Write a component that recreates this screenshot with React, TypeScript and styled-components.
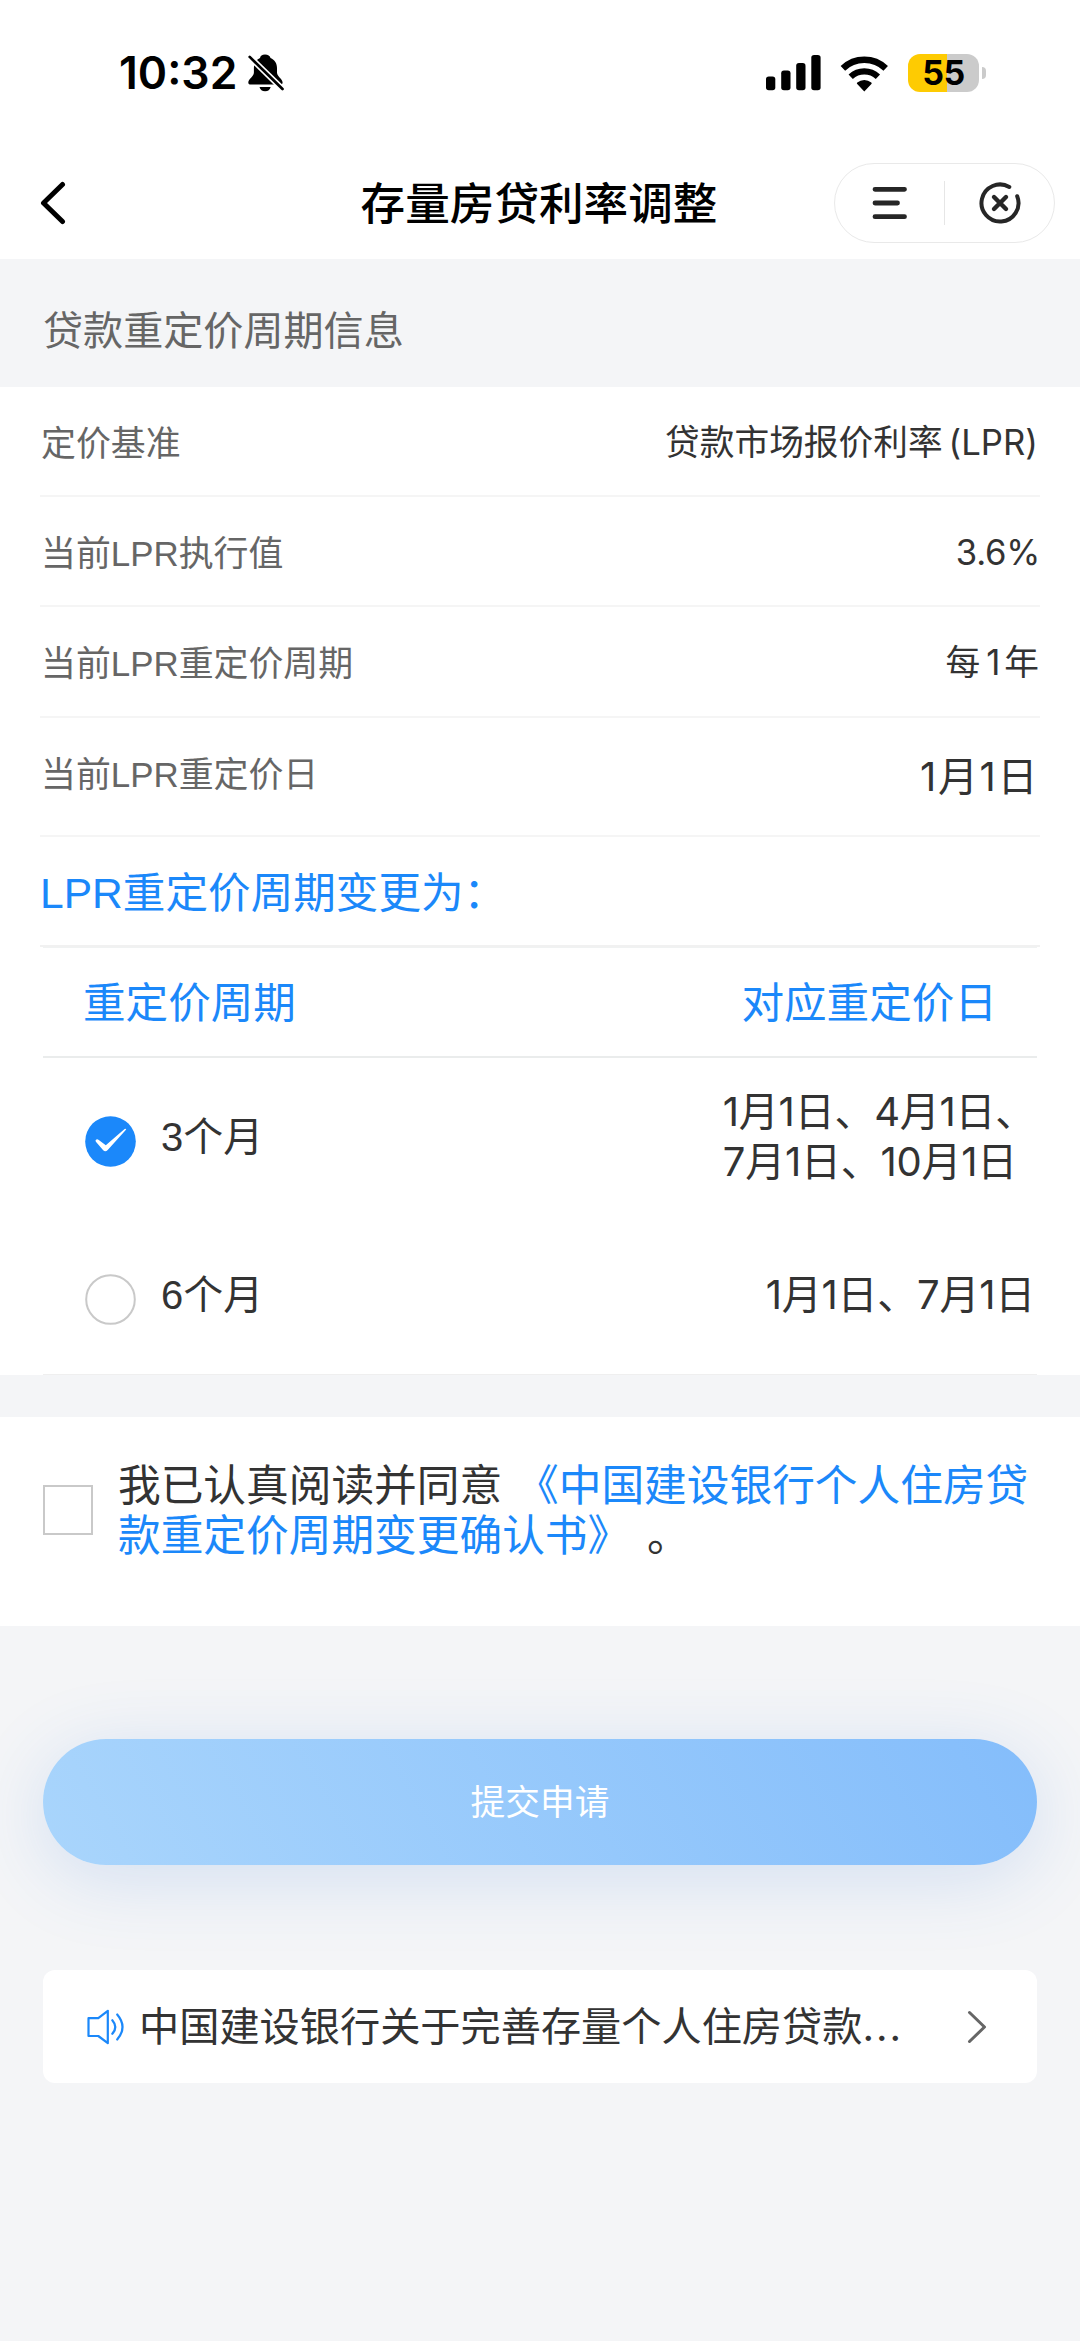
import React from 'react';
import styled, { createGlobalStyle } from 'styled-components';

const BLUE = '#1b88fa';
const sysFont = `Inter, "Noto Sans CJK SC", sans-serif`;
const bodyFont = `"Liberation Sans", "Noto Sans CJK SC", sans-serif`;

const GlobalStyle = createGlobalStyle`
  * { box-sizing: border-box; }
  body { margin: 0; background: #f4f5f7; }
`;

const Page = styled.div`
  width: 1080px;
  height: 2341px;
  display: flex;
  flex-direction: column;
  background: #f4f5f7;
  color: #333;
  font-family: ${bodyFont};
  overflow: hidden;
  white-space: nowrap;
`;

const StatusBar = styled.div`
  height: 146px;
  flex: none;
  display: flex;
  align-items: center;
  padding: 0 94px 0 119px;
  background: #fff;
  color: #000;
`;

const Clock = styled.span`
  width: 129px;
  font: 600 44.5px/60px ${sysFont};
  letter-spacing: 0;
`;

const StatusIcons = styled.div`
  margin-left: auto;
  display: flex;
  align-items: center;
`;

const SignalIcon = styled.svg`
  margin-right: 19px;
`;

const WifiIcon = styled.svg`
  margin-right: 19px;
`;

const Battery = styled.div`
  width: 71px;
  height: 38px;
  border-radius: 12px;
  background: linear-gradient(90deg, #fecb02 39px, #cbcbcb 39px);
  font: 650 34px/38px ${sysFont};
  letter-spacing: -0.5px;
  text-align: center;
`;

const BatteryTip = styled.span`
  width: 4px;
  height: 12px;
  margin-left: 3px;
  border-radius: 0 6px 6px 0;
  background: #cbcbcb;
`;

const NavBar = styled.header`
  height: 113px;
  flex: none;
  display: grid;
  grid-template-columns: 300px 1fr 300px;
  align-items: center;
  padding: 1px 25px 0 40px;
  background: #fff;
  color: #000;
`;

const NavTitle = styled.h1`
  margin: 0;
  padding: 1px 17px 0 0;
  text-align: center;
  font: 500 44.6px/60px ${sysFont};
`;

const Capsule = styled.div`
  justify-self: end;
  display: flex;
  align-items: center;
  width: 221px;
  height: 80px;
  border: 1.5px solid #e9e9e9;
  border-radius: 40px;
`;

const CapsuleHalf = styled.span`
  flex: 1;
  display: flex;
  justify-content: center;
`;

const CapsuleDivider = styled.span`
  width: 1px;
  height: 44px;
  background: #e6e6e6;
`;

const SectionTitle = styled.h2`
  height: 128px;
  flex: none;
  margin: 0;
  padding: 9px 43px 0;
  color: #666;
  font: 400 40.1px/126px ${bodyFont};
`;

const Panel = styled.section`
  flex: none;
  background: #fff;
`;

const InfoRow = styled.div<{ $height: number }>`
  display: flex;
  justify-content: space-between;
  height: ${(p) => p.$height}px;
  margin: 0 40px;
  border-bottom: 2px solid #f5f5f5;
`;

const InfoLabel = styled.span`
  padding-left: 1px;
  color: #666;
  font: 400 34.9px/113px ${bodyFont};
`;

const InfoValue = styled.span<{ $large?: boolean; $right?: number }>`
  font: 400 ${(p) => (p.$large ? 40 : 34.7)}px/${(p) => (p.$large ? 118 : 111)}px ${sysFont};
  letter-spacing: ${(p) => (p.$large ? 1.6 : 0)}px;
  padding-right: ${(p) => p.$right ?? 1}px;
`;

const Latin = styled.span`
  margin-left: 6px;
`;

const Numeral = styled.span`
  margin: 0 4px 0 6px;
`;

const Percent = styled.span`
  letter-spacing: -0.3px;
`;

const ChangeTitle = styled.h3`
  height: 110px;
  margin: 0 40px;
  border-bottom: 2px solid #f1f1f1;
  color: ${BLUE};
  font: 400 42.6px/112px ${bodyFont};
`;

const Table = styled.div`
  margin: 0 43px;
  border-bottom: 1px solid #efefef;
`;

const TableHead = styled.div`
  display: flex;
  justify-content: space-between;
  height: 111px;
  padding: 0 40px 0 40px;
  border-top: 1px solid #f0f2f2;
  border-bottom: 2px solid #eaecec;
  color: ${BLUE};
  font: 400 42.6px/111px ${bodyFont};
`;

const OptionRow = styled.div`
  display: flex;
  align-items: center;
  height: 158px;
  padding-left: 42px;
`;

const OptionLabel = styled.span`
  margin-left: 25px;
  font: 400 40px/50px ${bodyFont};
`;

const OptionDates = styled.span<{ $right: number }>`
  margin-left: auto;
  margin-right: ${(p) => p.$right}px;
  font: 400 40px/50.4px ${sysFont};
  letter-spacing: -0.25px;
`;

const RadioMark = styled.svg`
  margin-top: 9px;
  flex: none;
`;

const Gap = styled.div`
  height: 42px;
  flex: none;
`;

const Agreement = styled.label`
  flex: none;
  display: flex;
  align-items: flex-start;
  height: 209px;
  padding: 44px 43px 0;
  background: #fff;
`;

const CheckSquare = styled.span`
  flex: none;
  width: 50px;
  height: 50px;
  margin: 24px 25px 0 0;
  border: 2px solid #c9c9c9;
`;

const AgreementText = styled.p`
  margin: 0;
  width: 920px;
  white-space: normal;
  font: 400 42.7px/50px ${bodyFont};
`;

const DocLink = styled.span`
  margin: 0 5px 0 2px;
  color: ${BLUE};
`;

const SubmitButton = styled.button`
  flex: none;
  width: 994px;
  height: 126px;
  margin: 113px 43px 105px;
  border: 0;
  padding: 0;
  border-radius: 63px;
  background: linear-gradient(60deg, #a9d5fc 0%, #84bdfb 100%);
  box-shadow: 0 13px 76px rgba(60, 130, 220, 0.18);
  color: #fff;
  font: 400 34.7px/128px ${bodyFont};
`;

const Notice = styled.a`
  flex: none;
  display: flex;
  align-items: center;
  height: 113px;
  margin: 0 43px;
  padding: 0 50px 0 44px;
  border-radius: 12px;
  background: #fff;
`;

const NoticeText = styled.span`
  margin: 0 auto 0 14px;
  font: 400 40.2px/60px ${sysFont};
`;

const Dots = styled.span`
  letter-spacing: 2px;
`;

const BellSlash = () => (
  <svg width="37" height="39" viewBox="0 0 37 39">
    <path d="M17 0.4c-3 0-4.6 1.400-5 3.600C7.700 5.900 5.900 9.500 5.900 14v4.500c0 4-5.600 6.600-5.600 9.900 0 1.300.9 2.100 2.300 2.100h29.600c1.500 0 2.400-.8 2.400-2.100 0-3.300-5.600-5.900-5.600-9.900V14c0-4.500-2.200-8.100-6.500-10C22 1.800 20 .4 17 .4z" fill="#000" />
    <path d="M11.500 32.900h11.200c-.6 2.700-2.700 4.300-5.600 4.300s-5-1.600-5.600-4.300z" fill="#000" />
    <path d="M0 1.200 36.500 37" stroke="#fff" strokeWidth="6" />
    <path d="M1.700 2.900 34.500 35" stroke="#000" strokeWidth="2.700" strokeLinecap="round" />
  </svg>
);

const Signal = () => (
  <SignalIcon width="55" height="36" viewBox="0 0 55 36">
    <rect x="0" y="21.500" width="9.300" height="13.800" rx="2.800" />
    <rect x="15.200" y="15.500" width="9.300" height="19.800" rx="2.800" />
    <rect x="30.200" y="8" width="9.300" height="27.300" rx="2.800" />
    <rect x="45.300" y="0" width="9.300" height="35.300" rx="2.800" />
  </SignalIcon>
);

const Wifi = () => (
  <WifiIcon width="49" height="37" viewBox="0 0 49 37">
    <path d="M24.300 36.400 17.200 28.900q-.8-.8.100-1.500a11 11 0 0 1 14 0q.9.700.1 1.500z" />
    <path d="M10.700 21.800a20 20 0 0 1 27.200 0" fill="none" stroke="#000" strokeWidth="6.300" />
    <path d="M2.900 13.300a31 31 0 0 1 42.800 0" fill="none" stroke="#000" strokeWidth="6.500" />
  </WifiIcon>
);

const BackIcon = () => (
  <svg width="27" height="44" viewBox="0 0 27 44" fill="none" stroke="#000" strokeWidth="5" strokeLinecap="round" strokeLinejoin="round">
    <path d="M22.500 3.500 3.500 22l19 18.500" />
  </svg>
);

const MenuIcon = () => (
  <svg width="36" height="34" viewBox="0 0 36 34" fill="none" stroke="#262626" strokeWidth="4.800" strokeLinecap="round">
    <path d="M3 3.300h29.500M3 17h22.500M3 30.700h29.500" />
  </svg>
);

const CloseIcon = () => (
  <svg width="42" height="42" viewBox="0 0 42 42" fill="none" stroke="#262626" strokeWidth="4" strokeLinecap="round">
    <path d="M30.300 5A18.500 18.500 0 1 0 38.200 14.200" />
    <path d="M15 15l12 12M27 15 15 27" strokeWidth="4.400" />
  </svg>
);

const Radio = ({ checked }: { checked?: boolean }) => (
  <RadioMark width="51" height="51" viewBox="0 0 51 51">
    {checked ? (
      <>
        <circle cx="25.500" cy="25.500" r="25.300" fill={BLUE} />
        <path d="M10.800 24.100q1.200-1.700 3 0l7 5.200L39.600 12.900q1.300-.6 1.600.6L22.700 34q-2.400 2.400-4.500.2l-7.300-8.400q-.7-.9-.1-1.700z" fill="#fff" />
      </>
    ) : (
      <circle cx="25.500" cy="25.500" r="24.300" fill="#fff" stroke="#c9c9c9" strokeWidth="2" />
    )}
  </RadioMark>
);

const SpeakerIcon = () => (
  <svg width="38" height="36" viewBox="0 0 38 36" fill="none" stroke={BLUE} strokeWidth="2.200" strokeLinecap="round" strokeLinejoin="round">
    <path d="M1.500 9.200h9.800L20.800 1.800v32.400L11.300 27H1.500z" />
    <path d="M25.300 11.200q6 6.800 0 13.600M30.200 5.500q10.600 12.500 0 25" />
  </svg>
);

const ArrowIcon = () => (
  <svg width="20" height="34" viewBox="0 0 20 34" fill="none" stroke="#666" strokeWidth="3" strokeLinecap="round" strokeLinejoin="round">
    <path d="M2.500 2.500 17.500 17l-15 14.500" />
  </svg>
);

export default function App() {
  return (
    <Page>
      <GlobalStyle />
      <StatusBar>
        <Clock>10:32</Clock>
        <BellSlash />
        <StatusIcons>
          <Signal />
          <Wifi />
          <Battery>55</Battery>
          <BatteryTip />
        </StatusIcons>
      </StatusBar>
      <NavBar>
        <BackIcon />
        <NavTitle>存量房贷利率调整</NavTitle>
        <Capsule>
          <CapsuleHalf><MenuIcon /></CapsuleHalf>
          <CapsuleDivider />
          <CapsuleHalf><CloseIcon /></CapsuleHalf>
        </Capsule>
      </NavBar>

      <SectionTitle>贷款重定价周期信息</SectionTitle>
      <Panel>
        <InfoRow $height={110}>
          <InfoLabel>定价基准</InfoLabel>
          <InfoValue $right={2}>贷款市场报价利率<Latin>(LPR)</Latin></InfoValue>
        </InfoRow>
        <InfoRow $height={110}>
          <InfoLabel>当前LPR执行值</InfoLabel>
          <InfoValue $right={0}><Percent>3.6%</Percent></InfoValue>
        </InfoRow>
        <InfoRow $height={111}>
          <InfoLabel>当前LPR重定价周期</InfoLabel>
          <InfoValue>每<Numeral>1</Numeral>年</InfoValue>
        </InfoRow>
        <InfoRow $height={119}>
          <InfoLabel>当前LPR重定价日</InfoLabel>
          <InfoValue $large>1月1日</InfoValue>
        </InfoRow>
        <ChangeTitle>LPR重定价周期变更为：</ChangeTitle>
        <Table>
          <TableHead>
            <span>重定价周期</span>
            <span>对应重定价日</span>
          </TableHead>
          <OptionRow>
            <Radio checked />
            <OptionLabel>3个月</OptionLabel>
            <OptionDates $right={2}>1月1日、4月1日、<br />7月1日、10月1日</OptionDates>
          </OptionRow>
          <OptionRow>
            <Radio />
            <OptionLabel>6个月</OptionLabel>
            <OptionDates $right={2}>1月1日、7月1日</OptionDates>
          </OptionRow>
        </Table>
      </Panel>
      <Gap />
      <Agreement>
        <CheckSquare />
        <AgreementText>
          我已认真阅读并同意 <DocLink>《中国建设银行个人住房贷款重定价周期变更确认书》</DocLink> 。
        </AgreementText>
      </Agreement>
      <SubmitButton>提交申请</SubmitButton>
      <Notice>
        <SpeakerIcon />
        <NoticeText>中国建设银行关于完善存量个人住房贷款<Dots>...</Dots></NoticeText>
        <ArrowIcon />
      </Notice>
    </Page>
  );
}
